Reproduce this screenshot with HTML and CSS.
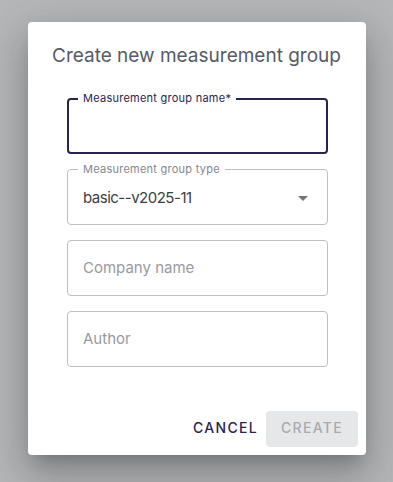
FILE: index.html
```html
<!DOCTYPE html>
<html>
<head>
<meta charset="utf-8">
<link rel="stylesheet" href="styles.css">
</head>
<body>
<div class="backdrop">
  <div class="dialog">
    <h2 class="title">Create new measurement group</h2>
    <div class="content">
      <div class="field focused">
        <span class="label">Measurement group name*</span>
      </div>
      <div class="field">
        <span class="label muted">Measurement group type</span>
        <span class="value">basic--v2025-11</span>
        <svg class="arrow" width="10" height="5" viewBox="0 0 10 5"><path d="M0 0 L10 0 L5 5 Z" fill="#757575"/></svg>
      </div>
      <div class="field">
        <span class="placeholder">Company name</span>
      </div>
      <div class="field">
        <span class="placeholder">Author</span>
      </div>
    </div>
    <div class="actions">
      <button class="btn cancel">CANCEL</button>
      <button class="btn create">CREATE</button>
    </div>
  </div>
</div>
</body>
</html>
```

FILE: styles.css
```css
html, body {
  margin: 0;
  padding: 0;
  height: 100%;
}
body {
  font-family: Inter, "Noto Sans", sans-serif;
  background: #b6b7b9;
}
.backdrop {
  height: 482px;
  display: flex;
  justify-content: center;
  padding-top: 22px;
  box-sizing: border-box;
}
.dialog {
  width: 338px;
  height: 433px;
  margin-left: 1px;
  background: #fff;
  border-radius: 4px;
  box-shadow: 0 11px 15px -7px rgba(0,0,0,0.2), 0 24px 38px 3px rgba(0,0,0,0.14), 0 9px 46px 8px rgba(0,0,0,0.12);
  display: flex;
  flex-direction: column;
  box-sizing: border-box;
}
.title {
  margin: 0;
  padding: 18px 0 0 24px;
  font-size: 19px;
  line-height: 32px;
  font-weight: 400;
  color: #565b67;
  white-space: nowrap;
}
.content {
  padding: 26px 38px 0 39px;
  display: flex;
  flex-direction: column;
  gap: 15px;
}
.field {
  position: relative;
  height: 56px;
  border: 1px solid #bdbec1;
  border-radius: 4px;
  box-sizing: border-box;
  display: flex;
  align-items: center;
  padding: 0 15px;
}
.field.focused {
  border: 2px solid #2a2350;
}
.label {
  position: absolute;
  top: -8px;
  left: 10px;
  padding: 0 5px;
  background: #fff;
  font-size: 11px;
  line-height: 14px;
  letter-spacing: 0.25px;
  color: #2a2350;
}
.field.focused .label {
  top: -9px;
  left: 9px;
}
.label.muted {
  color: #858690;
}
.value {
  font-size: 15px;
  letter-spacing: -0.5px;
  color: #3b3e46;
}
.placeholder {
  font-size: 15px;
  color: #989aa0;
  padding-bottom: 1px;
}
.arrow {
  position: absolute;
  right: 19px;
  top: 26px;
}
.actions {
  margin-top: auto;
  padding: 8px;
  display: flex;
  justify-content: flex-end;
  gap: 0;
}
.btn {
  height: 36px;
  border: none;
  border-radius: 4px;
  font-family: Inter, "Noto Sans", sans-serif;
  font-size: 14px;
  font-weight: 500;
  letter-spacing: 1.3px;
  padding: 0 8px 3px;
  background: transparent;
}
.cancel {
  color: #2a2350;
}
.create {
  width: 92px;
  background: #e6e7e9;
  color: #a9aaae;
}
```
